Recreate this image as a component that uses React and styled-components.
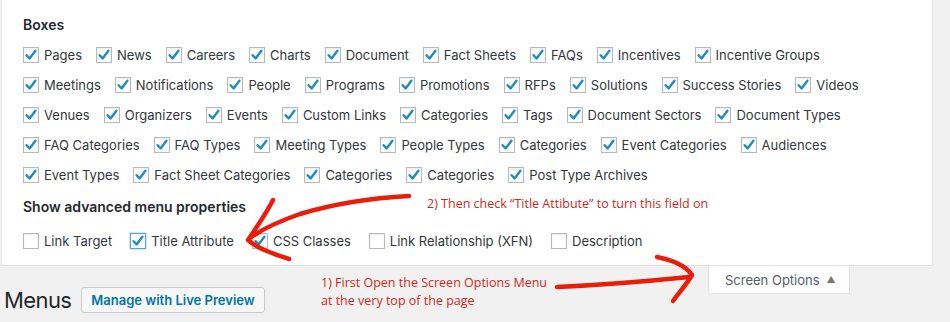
import React from 'react';
import styled, { createGlobalStyle } from 'styled-components';

const boxRows = [
  ['Pages', 'News', 'Careers', 'Charts', 'Document', 'Fact Sheets', 'FAQs', 'Incentives', 'Incentive Groups'],
  ['Meetings', 'Notifications', 'People', 'Programs', 'Promotions', 'RFPs', 'Solutions', 'Success Stories', 'Videos'],
  ['Venues', 'Organizers', 'Events', 'Custom Links', 'Categories', 'Tags', 'Document Sectors', 'Document Types'],
  ['FAQ Categories', 'FAQ Types', 'Meeting Types', 'People Types', 'Categories', 'Event Categories', 'Audiences'],
  ['Event Types', 'Fact Sheet Categories', 'Categories', 'Categories', 'Post Type Archives'],
];

const advanced = [
  { label: 'Link Target', checked: false },
  { label: 'Title Attribute', checked: true, focus: true },
  { label: 'CSS Classes', checked: true },
  { label: 'Link Relationship (XFN)', checked: false },
  { label: 'Description', checked: false },
];

const Check = ({ checked, focus }) => (
  <Box $focus={focus}>
    {checked && (
      <svg width="14" height="14" viewBox="0 0 14 14">
        <path d="M2.6 7.2 L5.6 10.4 L11.4 2.8" fill="none" stroke="#1e8cbe" strokeWidth="2.4" strokeLinecap="round" strokeLinejoin="round" />
      </svg>
    )}
  </Box>
);

const App = () => {
  return (
    <Page>
      <GlobalStyle />
      <Panel>
        <Heading>Boxes</Heading>
        {boxRows.map((row, r) => (
          <Row key={r}>
            {row.map((item, idx) => (
              <Item key={idx}>
                <Check checked />
                {item}
              </Item>
            ))}
          </Row>
        ))}
        <Heading $advanced>Show advanced menu properties</Heading>
        <Row $advanced>
          {advanced.map((item, idx) => (
            <Item key={idx} $wide>
              <Check checked={item.checked} focus={item.focus} />
              {item.label}
            </Item>
          ))}
        </Row>
      </Panel>
      <Footer>
        <TitleRow>
          <Title>Menus</Title>
          <PreviewButton>Manage with Live Preview</PreviewButton>
        </TitleRow>
        <ScreenTab>
          Screen Options <Caret>▲</Caret>
        </ScreenTab>
      </Footer>

      <Note $x={427} $y={195}>2) Then check “Title Attibute” to turn this field on</Note>
      <Note $x={321} $y={274}>
        1) First Open the Screen Options Menu
        <br />
        at the very top of the page
      </Note>
      <Arrows width="950" height="322" viewBox="0 0 950 322">
        <g fill="none" stroke="#ea1c0a" strokeWidth="4.5" strokeLinecap="round" strokeLinejoin="round">
          <path d="M409 196 C370 198 330 205 300 214 C280 221 262 229 250 238" />
          <path d="M273 200 C266 214 256 228 248 240 C258 249 274 254 289 259" />
          <path d="M557 287 C600 285 650 281 689 277" />
          <path d="M657 257 C672 260 686 266 692 275 C686 285 678 294 673 301" />
        </g>
      </Arrows>
    </Page>
  );
};

export default App;

const GlobalStyle = createGlobalStyle`
  body {
    margin: 0;
    background: #f1f1f1;
    font-family: Inter, "Noto Sans", sans-serif;
  }
`;

const Page = styled.div`
  position: relative;
  width: 950px;
  height: 322px;
  overflow: hidden;
  background: #f1f1f1;
`;

const Panel = styled.section`
  margin-left: 1px;
  width: 932px;
  height: 266px;
  box-sizing: border-box;
  padding: 15px 0 0 21px;
  background: #fff;
  border-left: 1px solid #e2e2e2;
  border-right: 1px solid #e2e2e2;
  border-bottom: 1px solid #e2e2e2;
`;

const Heading = styled.h5`
  margin: 0;
  height: ${({ $advanced }) => ($advanced ? '34px' : '25px')};
  line-height: ${({ $advanced }) => ($advanced ? '34px' : '20px')};
  font-size: 14px;
  font-weight: 600;
  color: #23282d;
`;

const Row = styled.div`
  display: flex;
  align-items: center;
  height: 30px;
  margin-top: ${({ $advanced }) => ($advanced ? '2px' : '0')};
`;

const Item = styled.label`
  display: flex;
  align-items: center;
  gap: 5px;
  margin-right: ${({ $wide }) => ($wide ? '18px' : '14px')};
  font-size: 13px;
  color: #32373c;
  white-space: nowrap;
`;

const Box = styled.span`
  display: flex;
  align-items: center;
  justify-content: center;
  width: 16px;
  height: 16px;
  box-sizing: border-box;
  border: 1px solid ${({ $focus }) => ($focus ? '#5b9dd9' : '#b4b9be')};
  box-shadow: ${({ $focus }) => ($focus ? '0 0 2px rgba(30,140,190,.6)' : 'inset 0 1px 2px rgba(0,0,0,.08)')};
  background: #fff;
`;

const Footer = styled.div`
  display: flex;
  justify-content: space-between;
  align-items: flex-start;
`;

const TitleRow = styled.div`
  display: flex;
  align-items: center;
  gap: 10px;
  margin: 21px 0 0 4px;
`;

const Title = styled.h1`
  margin: 0;
  font-size: 22px;
  font-weight: 400;
  color: #23282d;
  letter-spacing: -0.6px;
`;

const PreviewButton = styled.button`
  height: 26px;
  padding: 0 9px;
  border: 1px solid #ccc;
  border-radius: 3px;
  background: #f7f7f7;
  color: #0073aa;
  font-family: Inter, sans-serif;
  font-size: 13px;
  font-weight: 600;
`;

const ScreenTab = styled.div`
  display: flex;
  align-items: center;
  gap: 7px;
  margin-right: 100px;
  width: 142px;
  height: 28px;
  box-sizing: border-box;
  padding-left: 16px;
  background: #fff;
  border: 1px solid #e2e2e2;
  border-top: none;
  font-size: 13px;
  color: #555d66;
`;

const Caret = styled.span`
  font-size: 9px;
  color: #72777c;
`;

const Note = styled.div`
  position: absolute;
  left: ${({ $x }) => $x}px;
  top: ${({ $y }) => $y}px;
  font-family: "Open Sans", sans-serif;
  font-size: 12.5px;
  line-height: 18px;
  color: #d0281b;
  white-space: nowrap;
`;

const Arrows = styled.svg`
  position: absolute;
  left: 0;
  top: 0;
  pointer-events: none;
`;
